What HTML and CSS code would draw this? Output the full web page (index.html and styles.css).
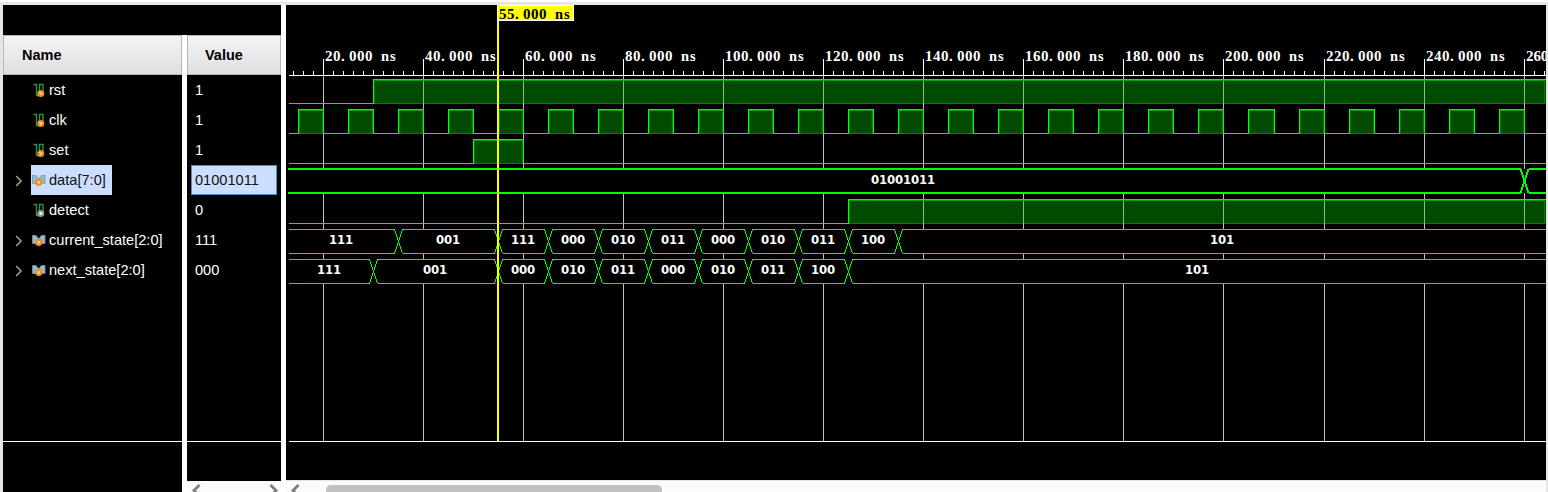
FILE: index.html
```
<!DOCTYPE html>
<html lang="en">
<head>
<meta charset="utf-8">
<title>Waveform</title>
<link rel="stylesheet" href="styles.css">
</head>
<body>
<svg class="defs" width="0" height="0">
  <symbol id="sig" viewBox="0 0 14 14">
    <path d="M1.5 1.5H4.5V12.5H7.5V1.5H11V8" fill="none" stroke="#2c9142" stroke-width="1.4"/>
    <circle cx="8.8" cy="10.4" r="3.5" fill="currentColor"/>
  </symbol>
  <symbol id="v" viewBox="0 0 14 14">
    <path d="M7.7 9.2L8.8 11.6L9.9 9.2" fill="none" stroke="#fff" stroke-width=".8"/>
  </symbol>
  <symbol id="bus" viewBox="0 0 14 14">
    <path d="M.5 2.5H4L6.7 6L9.4 2.5H13V10.5H.5Z" fill="#8fbdd2" stroke="#7896a5" stroke-width=".8"/>
    <circle cx="6.7" cy="9.3" r="3.7" fill="#ef8d22"/>
    <path d="M5.5 7.8L6.7 10.8L7.9 7.8" fill="none" stroke="#fff" stroke-width=".8"/>
  </symbol>
  <symbol id="chev" viewBox="0 0 8 12">
    <path d="M1.2 1L6 6L1.2 11" fill="none" stroke="#999" stroke-width="1.7"/>
  </symbol>
</svg>
<main class="app">
  <section class="table">
    <div class="spacer"></div>
    <div class="columns">
      <div class="names">
        <h2 class="head">Name</h2>
        <div class="row"><span class="toggle"></span><span class="name"><svg class="icon input"><use href="#sig"/><use href="#v"/></svg>rst</span></div>
        <div class="row"><span class="toggle"></span><span class="name"><svg class="icon input"><use href="#sig"/><use href="#v"/></svg>clk</span></div>
        <div class="row"><span class="toggle"></span><span class="name"><svg class="icon input"><use href="#sig"/><use href="#v"/></svg>set</span></div>
        <div class="row"><span class="toggle"><svg><use href="#chev"/></svg></span><span class="name selected"><svg class="icon"><use href="#bus"/></svg>data[7:0]</span></div>
        <div class="row"><span class="toggle"></span><span class="name"><svg class="icon output" viewBox="0 0 14 14"><use href="#sig"/><circle cx="8.8" cy="10.4" r="1.3" fill="#fff"/></svg>detect</span></div>
        <div class="row"><span class="toggle"><svg><use href="#chev"/></svg></span><span class="name"><svg class="icon"><use href="#bus"/></svg>current_state[2:0]</span></div>
        <div class="row"><span class="toggle"><svg><use href="#chev"/></svg></span><span class="name"><svg class="icon"><use href="#bus"/></svg>next_state[2:0]</span></div>
        <div class="rest"></div>
      </div>
      <div class="values">
        <h2 class="head">Value</h2>
        <div class="row value">1</div>
        <div class="row value">1</div>
        <div class="row value">1</div>
        <div class="row value active">01001011</div>
        <div class="row value">0</div>
        <div class="row value">111</div>
        <div class="row value">000</div>
        <div class="rest"></div>
        <div class="scroll small">
          <svg width="94" height="11" viewBox="187 481 94 11"><path d="M199.5 485L194 490.5L199.5 496M270.5 485L276 490.5L270.5 496"/></svg>
        </div>
      </div>
    </div>
  </section>
  <section class="wave">
    <svg id="plot" width="1260" height="475" viewBox="286 5 1260 475"></svg>
    <div class="scroll">
      <svg width="40" height="11" viewBox="286 481 40 11"><path d="M298.5 485L293 490.5L298.5 496"/></svg>
      <span class="thumb"></span>
    </div>
  </section>
</main>
<script src="wave.js"></script>
</body>
</html>
```
FILE: styles.css
```
* { box-sizing: border-box; }
body { margin: 0; width: 1548px; height: 492px; overflow: hidden; background: #e6e6e6; font: 14.6px/30px "Liberation Sans", Arial, sans-serif; color: #fff; }
.defs { display: block; }
.app { display: flex; height: 492px; padding: 3px 2px 0 3px; border-top: 2px solid #fff; }
.table { width: 278px; display: flex; flex-direction: column; }
.spacer { height: 30px; background: #000; }
.columns { flex: 1; display: flex; gap: 5px; background: #fff; }
.names, .values { display: flex; flex-direction: column; background: #000; }
.names { width: 179px; }
.values { width: 94px; }
.head { height: 40px; margin: 0; border: 1px solid #b8b8b8; background: linear-gradient(#f4f4f4, #dfdfe2); color: #000; font-size: 14.5px; line-height: 38px; padding-left: 18px; }
.values .head { padding-left: 17px; }
.row { height: 30px; display: flex; align-items: center; white-space: nowrap; }
.toggle { width: 28px; padding-left: 12px; display: flex; }
.toggle svg { width: 8px; height: 12px; margin-top: 2px; }
.name { height: 30px; display: flex; align-items: center; padding: 0 6px 0 1px; }
.selected { background: #ccdeff; color: #111; }
.icon { width: 14px; height: 14px; margin-right: 3px; }
.input { color: #ef8d22; }
.output { color: #999; }
.value { padding-left: 8px; font-size: 14.6px; }
.active { width: 86px; margin-left: 4px; padding-left: 3px; background: #ccdeff; border: 1px solid #4390ce; color: #111; }
.rest { height: 157px; border-bottom: 1px solid #fff; }
.names .rest, .values .rest { margin-bottom: 39px; }
.scroll { height: 12px; display: flex; background: #fbfbfb; border-top: 1px solid #e4e4e4; overflow: hidden; }
.scroll path { fill: none; stroke: #7d7d7d; stroke-width: 2.8; }
.small { height: 11px; border: 0; }
.wave { width: 1265px; border-left: 5px solid #fff; display: flex; flex-direction: column; }
.wave > svg { display: block; background: #000; }
.thumb { width: 336px; height: 12px; margin-top: 4px; border-radius: 5px; background: #c1c1c1; }
.line { fill: none; stroke: #00ff00; shape-rendering: crispEdges; }
.thick { stroke-width: 2; }
.slant { fill: none; stroke: #00ff00; shape-rendering: crispEdges; }
.high { fill: #004b00; shape-rendering: crispEdges; }
.inner { fill: none; stroke: #008000; shape-rendering: crispEdges; }
.innertop { fill: none; stroke: #00a000; shape-rendering: crispEdges; }
.grid { fill: none; stroke: #c0c0c0; shape-rendering: crispEdges; }
.over { fill: none; stroke: #80c880; shape-rendering: crispEdges; }
.white { fill: none; stroke: #fff; shape-rendering: crispEdges; }
.time { font: bold 15px "Liberation Serif", serif; fill: #fff; }
.unit { font-size: 14.5px; }
.bits { font: bold 13px "DejaVu Sans Condensed", "DejaVu Sans", sans-serif; font-stretch: condensed; fill: #fff; }
.flag { fill: #ff0; stroke: #fff; shape-rendering: crispEdges; }
.dark { fill: #000; }
.cursor { fill: #ff0; shape-rendering: crispEdges; }
```
FILE: wave.js
```
const START = 289, END = 1546;
const xAt = ns => Math.floor(323.15 + (ns - 20) * 5.0045) + 0.5;
const out = [];
const path = (cls, d) => out.push(`<path class="${cls}" d="${d}"/>`);

// Monospaced text: every character sits in its own cell.
function cells(cls, text, x, y, pitch) {
  const xs = [...text].map((c, i) => x + i * pitch + (c === 's' ? 1 : 0)).join(' ');
  const body = text.replace('ns', '<tspan class="unit">ns</tspan>');
  out.push(`<text class="${cls}" x="${xs}" y="${y}">${body}</text>`);
}

// Ruler and grid
for (let t = 20; t <= 260; t += 20) {
  const x = xAt(t);
  path('grid', `M${x} 76V441`);
  path('white', `M${x} 59V76`);
  cells('time', t < 260 ? t + '.000 ns' : String(t), x + 1.5, 61, t < 260 ? 8 : 7.4);
}
for (let t = 14; t <= 264; t += 2) path('white', `M${xAt(t)} ${t % 10 ? 71 : 70}V75`);
path('white', `M${START} 75.5H${END}M${START} 441.5H${END}`);

// Single-bit signals: list of [rise, fall] intervals in ns
function digital(top, pulses) {
  const bottom = top + 24;
  let d = `M${START} ${bottom}`;
  for (const [rise, fall] of pulses) {
    const a = xAt(rise), b = fall ? xAt(fall) : END;
    out.push(`<rect class="high" x="${a}" y="${top}" width="${b - a}" height="24"/>`);
    path('inner', `M${a + 1} ${top}V${bottom}H${fall ? b - 1 : b - 1.5}V${top}`);
    path('innertop', `M${a + 1} ${top + 1}H${b - 1}`);
    for (let t = 20; t <= 260; t += 20)
      if (xAt(t) > a && xAt(t) < b) path('over', `M${xAt(t)} ${top + 1}V${bottom}`);
    d += `H${a}V${top}H${b}`;
    if (fall) d += `V${bottom}`;
    else d += `M${a} ${bottom}`;
  }
  if (pulses[pulses.length - 1][1]) d += `H${END}`;
  path('line', d);
}
const clk = [];
for (let t = 15; t < 260; t += 10) clk.push([t, t + 5]);
digital(79.5, [[30, 0]]);
digital(109.5, clk);
digital(139.5, [[50, 60]]);
digital(199.5, [[125, 0]]);

// Buses: transition times and the value held in each interval
function bus(top, edges, values, thick, shift = 2) {
  const bottom = top + 24, xs = edges.map(xAt);
  const first = thick ? 288 : START;
  out.push(`<rect class="dark" x="${first}" y="${top}" width="${END - first}" height="24"/>`);
  const bounds = [first, ...xs, END];
  for (let i = 0; i < bounds.length - 1; i++) {
    const a = bounds[i] + (i ? 4 : 0);
    const b = bounds[i + 1] - (i < xs.length ? 4 : 0);
    path(thick ? 'line thick' : 'line', `M${a} ${top}H${b}M${a} ${bottom}H${b}`);
    if (values[i]) {
      const offset = i === xs.length ? -0.5 : i ? 0.5 : shift;
      const mid = (bounds[i] + bounds[i + 1]) / 2 - offset;
      cells('bits', values[i], Math.floor(mid - values[i].length * 4), Math.floor(top) + 15, 8);
    }
  }
  for (const x of xs) path(thick ? 'slant thick' : 'slant',
    `M${x - 4} ${top}L${x - 1} ${top + 9}L${x + 1} ${top + 15}L${x + 4} ${bottom}M${x + 4} ${top}L${x + 1} ${top + 9}L${x - 1} ${top + 15}L${x - 4} ${bottom}`);
}
bus(169, [260], ['01001011'], true, 2.5);
bus(229.5, [35, 55, 65, 75, 85, 95, 105, 115, 125, 135],
  ['111', '001', '111', '000', '010', '011', '000', '010', '011', '100', '101']);
bus(259.5, [30, 55, 65, 75, 85, 95, 105, 115, 125],
  ['111', '001', '000', '010', '011', '000', '010', '011', '100', '101']);

// Cursor
out.push('<rect class="cursor" x="497" y="5" width="2" height="436"/>');
out.push('<rect class="flag" x="497.5" y="5.5" width="76" height="15"/>');
cells('time dark', '55.000 ns', 499, 19, 8);

document.getElementById('plot').innerHTML = out.join('');
```
